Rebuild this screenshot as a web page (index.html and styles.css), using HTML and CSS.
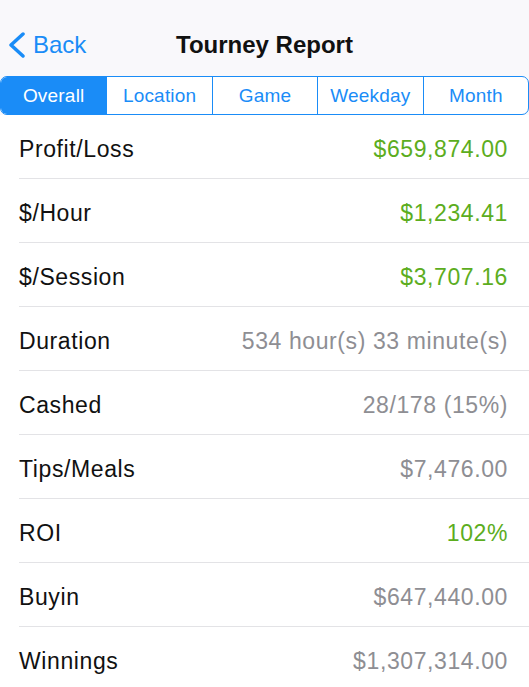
FILE: index.html
```html
<!DOCTYPE html>
<html lang="en">
<head>
    <meta charset="UTF-8">
    <meta name="viewport" content="width=device-width, initial-scale=1.0">
    <title>Tourney Report</title>
    <link rel="stylesheet" href="styles.css">
</head>
<body>
    <div class="header">
        <div class="navbar">
            <a class="back" href="#">
                <svg class="chevron" width="18" height="26" viewBox="0 0 18 26">
                    <path d="M15 2 L3 13 L15 24" fill="none" stroke="currentColor" stroke-width="3.5" stroke-linecap="round" stroke-linejoin="round"/>
                </svg>
                <span>Back</span>
            </a>
            <h1>Tourney Report</h1>
        </div>
        <div class="segmented">
            <div class="segment active">Overall</div>
            <div class="segment">Location</div>
            <div class="segment">Game</div>
            <div class="segment">Weekday</div>
            <div class="segment">Month</div>
        </div>
    </div>

    <ul class="report">
        <li class="row"><span class="label">Profit/Loss</span><span class="value green">$659,874.00</span></li>
        <li class="row"><span class="label">$/Hour</span><span class="value green">$1,234.41</span></li>
        <li class="row"><span class="label">$/Session</span><span class="value green">$3,707.16</span></li>
        <li class="row"><span class="label">Duration</span><span class="value">534 hour(s) 33 minute(s)</span></li>
        <li class="row"><span class="label">Cashed</span><span class="value">28/178 (15%)</span></li>
        <li class="row"><span class="label">Tips/Meals</span><span class="value">$7,476.00</span></li>
        <li class="row"><span class="label">ROI</span><span class="value green">102%</span></li>
        <li class="row"><span class="label">Buyin</span><span class="value">$647,440.00</span></li>
        <li class="row"><span class="label">Winnings</span><span class="value">$1,307,314.00</span></li>
    </ul>
</body>
</html>
```

FILE: styles.css
```css
body {
    font-family: 'Liberation Sans', Arial, sans-serif;
    background-color: white;
    margin: 0;
    color: #111;
}
.header {
    background-color: #f9f8fb;
    padding-top: 23px;
}
.navbar {
    position: relative;
    height: 44px;
    display: flex;
    align-items: center;
    justify-content: center;
    margin-bottom: 9px;
}
.back {
    position: absolute;
    left: 8px;
    top: 0;
    height: 44px;
    display: flex;
    align-items: center;
    gap: 7px;
    color: #1a8cf7;
    text-decoration: none;
    font-size: 24px;
}
h1 {
    margin: 0;
    font-size: 24px;
    font-weight: bold;
    color: #111;
}
.segmented {
    display: grid;
    grid-template-columns: repeat(5, 1fr);
    height: 39px;
    border: 1.5px solid #1a8cf7;
    border-radius: 7px;
    overflow: hidden;
    background-color: white;
    box-sizing: border-box;
}
.segment {
    display: flex;
    align-items: center;
    justify-content: center;
    font-size: 19px;
    letter-spacing: 0.2px;
    color: #1a8cf7;
    border-left: 1px solid #1a8cf7;
}
.segment:first-child {
    border-left: none;
}
.segment.active {
    background-color: #1a8cf7;
    color: white;
}
.report {
    list-style: none;
    margin: 0;
    padding: 0 0 0 19px;
}
.row {
    display: flex;
    justify-content: space-between;
    align-items: center;
    box-sizing: border-box;
    height: 64px;
    padding: 5px 21px 0 0;
    border-bottom: 1px solid #e3e3e6;
    font-size: 23px;
    letter-spacing: 0.6px;
}
.value {
    color: #8e8e93;
}
.value.green {
    color: #5cad1e;
}
```
